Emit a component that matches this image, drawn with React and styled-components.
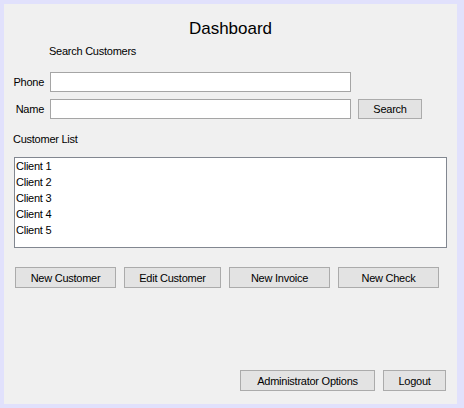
import styled, { createGlobalStyle } from 'styled-components'

const Global = createGlobalStyle`
  html, body {
    margin: 0;
    padding: 0;
    background: #e1e1fc;
  }
  body {
    font-family: "Liberation Sans", Arial, sans-serif;
    font-size: 11px;
    letter-spacing: -0.25px;
    color: #000000;
  }
`

const Frame = styled.div`
  width: 464px;
  height: 408px;
  padding: 4px 7px 4px 4px;
  box-sizing: border-box;
`

const Panel = styled.div`
  height: 100%;
  background: #f0f0f0;
  display: flex;
  flex-direction: column;
`

const Title = styled.h1`
  margin: 15px 0 0;
  font-size: 17px;
  font-weight: normal;
  letter-spacing: 0;
  line-height: 20px;
  text-align: center;
`

const SectionLabel = styled.div`
  margin: ${({ $top }) => $top}px 0 0 ${({ $left }) => $left}px;
  line-height: 14px;
`

const FieldRow = styled.div`
  display: flex;
  align-items: center;
  margin-top: ${({ $top }) => $top}px;
  padding-left: 9px;
`

const FieldLabel = styled.label`
  width: 31px;
  text-align: right;
  margin-right: 6px;
`

const TextInput = styled.input`
  width: 301px;
  height: 20px;
  box-sizing: border-box;
  border: 1px solid #a5a5a5;
  background: #ffffff;
  padding: 0 3px;
  font: inherit;
  outline: none;
`

const Button = styled.button`
  width: ${({ $w }) => $w}px;
  height: ${({ $h }) => $h || 21}px;
  box-sizing: border-box;
  border: 1px solid #ababab;
  background: #e3e3e3;
  font-family: "Liberation Sans", Arial, sans-serif;
  font-size: 11px;
  letter-spacing: -0.25px;
  color: #000000;
  padding: 0;
  margin-left: ${({ $ml }) => $ml || 0}px;
`

const ListBox = styled.ul`
  list-style: none;
  margin: 11px 0 0 10px;
  padding: 0 1px;
  width: 433px;
  height: 91px;
  box-sizing: border-box;
  border: 1px solid #828790;
  background: #ffffff;
`

const ListItem = styled.li`
  line-height: 16px;
  height: 16px;
`

const ButtonBar = styled.div`
  display: flex;
  gap: 8px;
  margin: 19px 0 0 11px;
`

const Footer = styled.div`
  margin-top: auto;
  margin-bottom: 13px;
  display: flex;
  justify-content: flex-end;
  gap: 8px;
  padding-right: 11px;
`

const clients = ['Client 1', 'Client 2', 'Client 3', 'Client 4', 'Client 5']

export default function App() {
  return (
    <Frame>
      <Global />
      <Panel>
        <Title>Dashboard</Title>
        <SectionLabel $top={5} $left={45}>Search Customers</SectionLabel>
        <FieldRow $top={14}>
          <FieldLabel>Phone</FieldLabel>
          <TextInput />
        </FieldRow>
        <FieldRow $top={7}>
          <FieldLabel>Name</FieldLabel>
          <TextInput />
          <Button $w={64} $h={20} $ml={7}>Search</Button>
        </FieldRow>
        <SectionLabel $top={13} $left={9}>Customer List</SectionLabel>
        <ListBox>
          {clients.map((c) => (
            <ListItem key={c}>{c}</ListItem>
          ))}
        </ListBox>
        <ButtonBar>
          <Button $w={101}>New Customer</Button>
          <Button $w={97}>Edit Customer</Button>
          <Button $w={101}>New Invoice</Button>
          <Button $w={101}>New Check</Button>
        </ButtonBar>
        <Footer>
          <Button $w={135}>Administrator Options</Button>
          <Button $w={63}>Logout</Button>
        </Footer>
      </Panel>
    </Frame>
  )
}
